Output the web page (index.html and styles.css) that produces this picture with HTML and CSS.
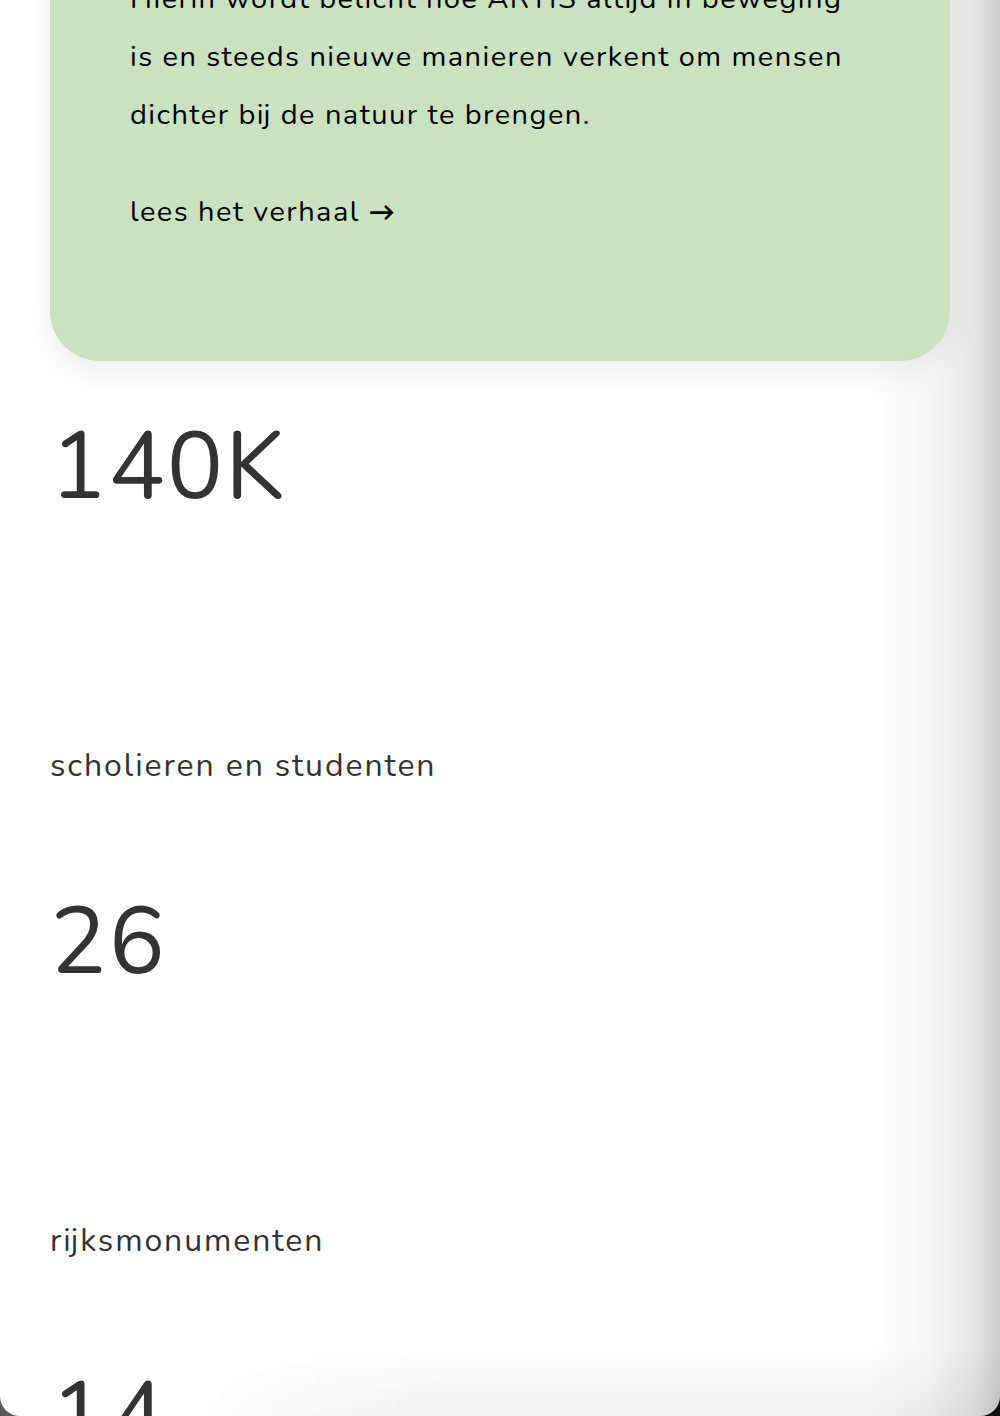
FILE: index.html
```html
<!DOCTYPE html>
<html lang="nl">
<head>
<meta charset="utf-8">
<title>ARTIS</title>
<link rel="stylesheet" href="styles.css">
</head>
<body>
<main class="page">
  <section class="story-card">
    <p class="story-text">Hierin wordt belicht hoe ARTIS altijd in beweging is en steeds nieuwe manieren verkent om mensen dichter bij de natuur te brengen.</p>
    <a class="story-link" href="#">lees het verhaal <span class="arrow">→</span></a>
  </section>
  <section class="stats">
    <div class="stat">
      <div class="stat-number">140K</div>
      <div class="stat-label">scholieren en studenten</div>
    </div>
    <div class="stat">
      <div class="stat-number">26</div>
      <div class="stat-label">rijksmonumenten</div>
    </div>
    <div class="stat">
      <div class="stat-number">14</div>
      <div class="stat-label">&nbsp;</div>
    </div>
  </section>
</main>
</body>
</html>
```

FILE: styles.css
```css
html, body {
  margin: 0;
  padding: 0;
}
body {
  background: linear-gradient(to right, #5a5a5a, #111111);
  height: 1416px;
  overflow: hidden;
  font-family: "Nunito", Lato, "Open Sans", sans-serif;
}
.page {
  position: relative;
  width: 1000px;
  height: 1416px;
  background: #ffffff;
  border-radius: 0 0 20px 20px;
  overflow: hidden;
}
.page::after {
  content: "";
  position: absolute;
  inset: 0;
  pointer-events: none;
  z-index: 0;
  background: linear-gradient(to right, rgba(0,0,0,0) 87%, rgba(0,0,0,0.035) 93%, rgba(0,0,0,0.1) 97.5%, rgba(0,0,0,0.2) 100%);
}
.page::before {
  content: "";
  position: absolute;
  left: 0;
  right: 0;
  bottom: 0;
  height: 70px;
  pointer-events: none;
  z-index: 0;
  background: linear-gradient(to top, rgba(0,0,0,0.06), rgba(0,0,0,0) 100%);
  -webkit-mask-image: linear-gradient(to right, transparent 18%, black 45%);
  mask-image: linear-gradient(to right, transparent 18%, black 45%);
}
.story-card {
  position: relative;
  z-index: 1;
  margin: -90px 50px 0;
  padding: 60px 80px 118px;
  background: #cae2c0;
  border-radius: 0 0 50px 50px;
  box-shadow: 0 12px 30px rgba(0,0,0,0.07);
  color: #000000;
  font-size: 29px;
  line-height: 58px;
  letter-spacing: 1.45px;
}
.story-text {
  margin: 0 0 38px;
}
.story-link {
  display: block;
  color: #000000;
  text-decoration: none;
  line-height: 60px;
}
.arrow {
  font-size: 26px;
  font-weight: 700;
  letter-spacing: 0;
}
.stats {
  position: relative;
  z-index: 1;
  padding: 50px 50px 0;
  color: #333333;
}
.stat {
  display: flex;
  flex-direction: column;
  padding-bottom: 96px;
}
.stat-number {
  font-size: 94px;
  line-height: 113px;
  letter-spacing: 2px;
}
.stat-label {
  margin-top: 218px;
  font-size: 32px;
  line-height: 48px;
  letter-spacing: 1.9px;
}
```
